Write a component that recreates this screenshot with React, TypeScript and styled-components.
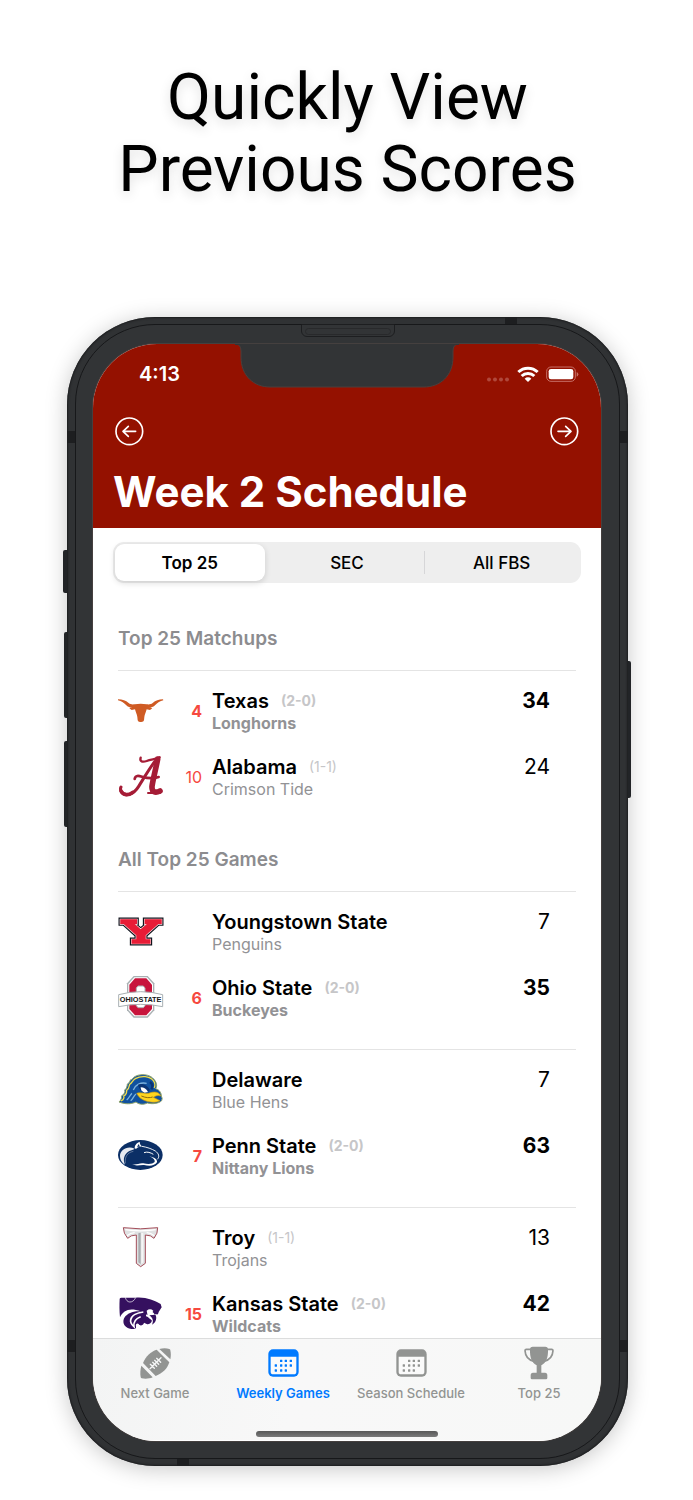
import React, { useState } from "react";
import styled, { createGlobalStyle, css } from "styled-components";

const GlobalStyle = createGlobalStyle`
  *, *::before, *::after { box-sizing: border-box; }
  body {
    margin: 0;
    background: #fff;
    color: #000;
    font-family: Inter, "Liberation Sans", sans-serif;
  }
  h1, h2, p, ul { margin: 0; padding: 0; font-weight: inherit; }
  button { border: 0; background: none; padding: 0; margin: 0; font: inherit; color: inherit; cursor: pointer; }
  svg { display: block; }
`;

const Page = styled.main`
  display: flex;
  flex-direction: column;
  gap: 111px;
  padding: 62px 65px 34px 67px;
`;

const Headline = styled.h1`
  font-family: Roboto, "Liberation Sans", sans-serif;
  font-size: 64px;
  line-height: 72px;
  text-align: center;
  text-shadow: 0 4px 12px rgba(0, 0, 0, 0.13);
`;

/* ---------- device ---------- */

const Phone = styled.section`
  position: relative;
  padding: 7px 8px;
  border-radius: 88px;
  background: #303234;
  box-shadow: inset 0 0 2px 1px #1c1d1f, 0 3px 22px rgba(0, 0, 0, 0.22);
`;

const Bezel = styled.div`
  position: relative;
  padding: 19px 18px 17px 17px;
  border: 1px solid #17181a;
  border-radius: 80px;
  background: #323436;
`;

const Screen = styled.div`
  position: relative;
  overflow: hidden;
  border-radius: 64px;
  background: #fff;
  box-shadow: 0 0 0 1px #45403f;
`;

const SideButton = styled.span<{ $side: "left" | "right"; $top: number; $length: number; $depth: number }>`
  position: absolute;
  top: ${(p) => p.$top}px;
  ${(p) => p.$side}: -${(p) => p.$depth}px;
  width: ${(p) => p.$depth}px;
  height: ${(p) => p.$length}px;
  border-radius: ${(p) => (p.$side === "left" ? "2px 0 0 2px" : "0 2px 2px 0")};
  background: #222427;
`;

const Band = styled.span<{ $edge: "left" | "right" | "top" | "bottom"; $from: "top" | "bottom" | "left" | "right"; $at: number }>`
  position: absolute;
  ${(p) => p.$edge}: 0;
  ${(p) => p.$from}: ${(p) => p.$at}px;
  background: #1d1e20;
  ${(p) =>
    p.$edge === "left" || p.$edge === "right"
      ? css`width: 8px; height: 12px;`
      : css`width: 12px; height: 7px;`}
`;

const Speaker = styled.span`
  position: absolute;
  top: -1px;
  left: 50%;
  width: 94px;
  height: 13px;
  margin-left: -47px;
  border: 1px solid #1d1e20;
  border-radius: 1px 1px 6px 6px;

  &::after {
    content: "";
    position: absolute;
    inset: 3px 3px 1px;
    border: 1px solid #28292b;
    border-radius: 4px;
  }
`;

const Notch = styled.svg`
  position: absolute;
  top: 0;
  left: 50%;
  margin-left: -112px;
`;

/* ---------- header ---------- */

const Header = styled.header`
  padding: 18px 20px 11px;
  background: #941100;
  color: #fff;
`;

const StatusBar = styled.div`
  display: flex;
  align-items: center;
  justify-content: space-between;
  padding: 0 2px 0 26px;
  font-size: 20px;
  font-weight: 600;
  line-height: 24px;
`;

const StatusIcons = styled.div`
  display: flex;
  align-items: center;
  gap: 7px;
`;

const NavRow = styled.nav`
  display: flex;
  justify-content: space-between;
  padding: 31px 2px 21px;
`;

const Title = styled.h2`
  font-size: 42px;
  font-weight: 700;
  line-height: 50px;
`;

/* ---------- filter ---------- */

const Segments = styled.div`
  display: grid;
  grid-template-columns: repeat(3, 1fr);
  margin: 14px 20px 0;
  padding: 2px;
  border-radius: 11px;
  background: #eee;
`;

const Segment = styled.button<{ $selected: boolean; $divided: boolean }>`
  position: relative;
  height: 37px;
  margin-right: ${(p) => (p.$selected ? 5 : 0)}px;
  border-radius: 9px;
  font-size: 17px;
  font-weight: ${(p) => (p.$selected ? 600 : 500)};
  line-height: 20px;
  ${(p) =>
    p.$selected &&
    css`
      background: #fff;
      box-shadow: 0 2px 6px rgba(0, 0, 0, 0.14);
    `}
  ${(p) =>
    p.$divided &&
    css`
      &::before {
        content: "";
        position: absolute;
        left: 0;
        top: 7px;
        bottom: 7px;
        width: 1px;
        background: #d6d6d8;
      }
    `}
`;

/* ---------- schedule ---------- */

const Schedule = styled.div`
  padding: 24px 25px 0;
`;

const SectionTitle = styled.h2`
  padding: 20px 0 19px;
  color: #8c8c8f;
  font-size: 19px;
  font-weight: 600;
  line-height: 24px;
`;

const Game = styled.article<{ $last?: boolean }>`
  display: flex;
  flex-direction: column;
  gap: 22px;
  padding: 18px 26px ${(p) => (p.$last ? 2 : 29)}px 0;
  border-top: 1px solid #e4e4e4;
`;

const TeamRow = styled.div<{ $winner: boolean }>`
  display: grid;
  grid-template-columns: 46px 28px 1fr auto;
  column-gap: 10px;
  align-items: center;
  height: 44px;
  font-weight: ${(p) => (p.$winner ? 700 : 400)};
`;

const Rank = styled.span`
  color: #f6493f;
  font-size: 16px;
  line-height: 20px;
  text-align: right;
`;

const TeamText = styled.div`
  min-width: 0;
`;

const NameLine = styled.p`
  display: flex;
  align-items: center;
  gap: 12px;
  line-height: 24px;
  white-space: nowrap;
`;

const TeamName = styled.span`
  font-size: 20px;
  font-weight: 600;
`;

const Record = styled.span`
  color: #c6c6c8;
  font-size: 14px;
`;

const Mascot = styled.p`
  color: #929295;
  font-size: 16px;
  line-height: 20px;
`;

const Score = styled.span`
  align-self: start;
  font-size: 21px;
  line-height: 24px;
`;

/* ---------- tab bar ---------- */

const TabBar = styled.footer`
  border-top: 1px solid #dcdddd;
  border-bottom: 1px solid #fff;
  background: linear-gradient(100deg, #f3f4f4, #f8f8f8 40%, #f7f8f7);
`;

const Tabs = styled.nav`
  display: flex;
  margin: 0 -2px;
  padding-top: 7px;
`;

const Tab = styled.button<{ $active: boolean }>`
  flex: 1 1 0;
  display: flex;
  flex-direction: column;
  align-items: center;
  gap: 5px;
  color: ${(p) => (p.$active ? "#007aff" : "#929492")};
  font-size: 13px;
  font-weight: ${(p) => (p.$active ? 600 : 500)};
  line-height: 16px;
  white-space: nowrap;
`;

const TabIcon = styled.span`
  display: grid;
  place-items: center;
  height: 34px;
`;

const HomeIndicator = styled.div`
  width: 182px;
  height: 6px;
  margin: 30px auto 3px;
  border-radius: 3px;
  background: linear-gradient(#585858, #7a7a7a);
`;

/* ---------- icons ---------- */

function CircleArrow({ flip = false }: { flip?: boolean }) {
  return (
    <svg width="29" height="29" viewBox="0 0 87 87" fill="none" stroke="#fff" strokeWidth="5" strokeLinecap="round" strokeLinejoin="round" aria-hidden="true">
      <circle cx="43" cy="43" r="40" />
      <path d={flip ? "M24 43H63M47 28L63 43L47 58" : "M62 43H24M40 28L24 43L40 58"} />
    </svg>
  );
}

function SignalDots() {
  return (
    <svg width="24" height="16" viewBox="0 0 24 16" fill="#b0483b" aria-hidden="true">
      {[3, 9, 15, 21].map((x) => (
        <circle key={x} cx={x} cy="13.5" r="2" />
      ))}
    </svg>
  );
}

function Wifi() {
  return (
    <svg width="22" height="16" viewBox="0 0 66 48" fill="none" stroke="#fff" strokeWidth="9" aria-hidden="true">
      <path d="M4 18A42 42 0 0 1 62 18" />
      <path d="M14 30A27 27 0 0 1 52 30" />
      <path d="M33 48L23 38A14 14 0 0 1 43 38Z" fill="#fff" stroke="none" />
    </svg>
  );
}

function Battery() {
  return (
    <svg width="33" height="16" viewBox="0 0 99 48" aria-hidden="true">
      <rect x="2" y="3" width="86" height="43" rx="13" fill="none" stroke="#c76f65" strokeWidth="3" />
      <rect x="8" y="9" width="74" height="31" rx="7" fill="#fff" />
      <path d="M92 18Q97 20 97 25T92 32Z" fill="#c76f65" />
    </svg>
  );
}

function FootballIcon() {
  return (
    <svg width="31" height="31" viewBox="0 0 93 93" aria-hidden="true">
      <g fill="currentColor">
        <path d="M9 45C18 24 32 11 50 5L88 43C82 62 68 76 47 84Z" />
        <path d="M58 3C68 0 80 0 88 3Q91 4 91 7C93 15 93 26 91 34Z" />
        <path d="M4 53L38 88C28 93 14 93 5 91Q2 90 2 87C0 77 1 63 4 53Z" />
      </g>
      <path d="M30 62L63 29M31 49L43 61M38 43L50 55M44 37L56 49M50 31L62 43" stroke="#f6f7f7" strokeWidth="4" strokeLinecap="round" fill="none" />
    </svg>
  );
}

function CalendarIcon() {
  const dots = [
    [39, 35], [53, 35], [68, 35],
    [23, 49], [39, 49], [53, 49], [68, 49],
    [23, 64], [39, 64], [53, 64],
  ];
  return (
    <svg width="31" height="28" viewBox="0 0 93 84" aria-hidden="true">
      <rect x="1" y="1" width="91" height="82" rx="14" fill="currentColor" />
      <path d="M8 23H85V69Q85 76 77 76H16Q8 76 8 69Z" fill="#fafafa" />
      {dots.map(([x, y]) => (
        <rect key={`${x}-${y}`} x={x - 3} y={y - 3} width="7" height="7" rx="1" fill="currentColor" />
      ))}
    </svg>
  );
}

function TrophyIcon() {
  return (
    <svg width="30" height="34" viewBox="0 0 90 102" aria-hidden="true">
      <g fill="currentColor">
        <path d="M18 8Q19 2 26 2H64Q71 2 72 8C73 36 66 50 52 58V80H63Q70 80 70 88V96Q70 100 66 100H24Q20 100 20 96V88Q20 80 27 80H38V58C24 50 17 36 18 8Z" />
      </g>
      <path d="M19 10H7Q3 10 3 14C4 32 14 43 31 46M71 10H83Q87 10 87 14C86 32 76 43 59 46" fill="none" stroke="currentColor" strokeWidth="5" strokeLinecap="round" />
    </svg>
  );
}

/* ---------- team logos ---------- */

function Logo({ children }: { children: React.ReactNode }) {
  return (
    <svg width="46" height="44" viewBox="0 0 138 132" overflow="visible" aria-hidden="true">
      {children}
    </svg>
  );
}

const TexasLogo = () => (
  <Logo>
    <path
      fill="#cf5b24"
      d="M0 31C14 31 23 35 32 42C37 46 42 47 50 46Q68 43 86 46C94 47 99 46 104 42C113 35 122 31 135 31L136 34C126 36 119 41 111 49C106 54 101 56 94 55L103 58L96 63L86 61C84 70 80 76 79 84L78 94Q77 99 70 99H66Q60 99 59 94L58 84C57 76 53 70 51 61L41 63L34 58L42 55C35 56 30 54 25 49C17 41 10 36 0 34Z"
    />
  </Logo>
);

const AlabamaLogo = () => (
  <Logo>
    <g fill="none" stroke="#a51c36" strokeLinecap="round" strokeLinejoin="round">
      <path d="M68 8C64 20 74 22 86 18C100 12 112 14 125 7" strokeWidth="7" />
      <path d="M119 12C114 40 105 72 102 94C101 112 112 115 126 108" strokeWidth="17" />
      <path d="M110 20C92 44 76 72 62 94C46 120 20 128 9 108Q6 102 9 96" strokeWidth="9" />
      <path d="M9 108C16 122 32 122 44 112" strokeWidth="11" />
      <path d="M50 72C52 60 62 62 72 65C88 70 104 72 122 66" strokeWidth="8" />
      <path d="M90 114H126" strokeWidth="6" />
    </g>
  </Logo>
);

const youngstownShape =
  "M7 28H57V42H50L68 58L87 42H80V28H131V42H121L83 76V88H97V101H41V88H55V76L17 42H7Z";

const YoungstownLogo = () => (
  <Logo>
    <path d={youngstownShape} fill="#10131c" stroke="#10131c" strokeWidth="11" />
    <path d={youngstownShape} fill="#fff" stroke="#fff" strokeWidth="4" />
    <path d={youngstownShape} fill="#e81c36" stroke="#e81c36" strokeWidth="1" />
  </Logo>
);

const OhioStateLogo = () => (
  <Logo>
    <path d="M47 0H89L109 22V103L89 125H47L27 103V22Z" fill="#a9b0b3" />
    <path d="M49 4H87L105 24V101L87 121H49L31 101V24Z" fill="#fff" />
    <path d="M51 7H85L102 26V99L85 118H51L34 99V26Z" fill="#c8143c" />
    <path d="M60 30H76L81 36V89L76 95H60L55 89V36Z" fill="#fff" stroke="#a9b0b3" strokeWidth="3" />
    <path d="M2 56Q68 38 134 56V92Q68 78 2 92Z" fill="#fff" stroke="#a9b0b3" strokeWidth="3" />
    <text x="68" y="78" fontFamily='"Liberation Sans", sans-serif' fontWeight="700" fontSize="22" textAnchor="middle" fill="#15171a">
      OHIOSTATE
    </text>
  </Logo>
);

const DelawareLogo = () => (
  <Logo>
    <path
      d="M3 102C10 96 12 88 10 84C18 80 22 72 20 66C26 62 28 52 28 48C34 46 36 38 38 35C42 36 46 28 50 26C66 16 96 18 108 34C118 46 117 56 113 62C126 66 130 76 130 84Q135 92 131 98C122 107 102 109 88 105C74 112 60 108 54 102C38 110 18 108 3 102Z"
      fill="#11519e"
      stroke="#8fa36c"
      strokeWidth="3"
    />
    <path d="M9 99C20 94 18 86 17 84C27 80 26 70 26 67C35 62 33 52 35 49C42 46 44 36 52 32C70 22 94 24 106 38C112 46 112 54 108 60" fill="none" stroke="#f2dd4a" strokeWidth="4" />
    <path d="M26 96C34 90 36 80 42 76M38 98C46 92 46 84 54 78M46 66C52 50 68 42 86 46" fill="none" stroke="#7db2dc" strokeWidth="4" />
    <path d="M60 50C74 44 88 52 96 66L84 76C74 74 64 66 60 50Z" fill="#0b3473" />
    <path d="M68 58C78 58 86 64 90 72L80 74C72 72 68 66 68 58Z" fill="#fff" />
    <path d="M96 42C104 48 105 56 100 64" fill="none" stroke="#0b3473" strokeWidth="7" />
    <path d="M56 76C68 72 80 78 92 76C106 70 124 70 128 84C120 80 112 84 106 88L126 98C112 105 96 103 84 99C72 95 62 89 56 76Z" fill="#ffd51f" stroke="#c59a17" strokeWidth="2" />
    <path d="M70 84C84 90 96 90 104 87" fill="none" stroke="#8a6a12" strokeWidth="3" />
  </Logo>
);

const PennStateLogo = () => (
  <Logo>
    <ellipse cx="67" cy="63" rx="67" ry="45" fill="#0b2f66" />
    <path d="M50 42C50 32 58 26 65 23C65 30 68 34 74 38C66 36 58 40 54 45Z" fill="#fff" />
    <path d="M57 38L63 29C63 34 65 37 68 38Z" fill="#0b2f66" />
    <path d="M50 44C28 34 6 48 6 66C7 80 14 88 21 92C14 76 18 60 34 51C40 48 46 47 50 44Z" fill="#fff" opacity=".9" />
    <path d="M46 52C28 56 20 68 22 88" fill="none" stroke="#fff" strokeWidth="2" opacity=".5" />
    <path d="M72 37C88 40 100 44 112 51C122 58 126 68 118 76" fill="none" stroke="#e9eef5" strokeWidth="3" />
    <path d="M78 56C88 52 98 56 106 61" fill="none" stroke="#fff" strokeWidth="3" />
    <path d="M42 90C52 95 64 86 76 88C92 91 104 90 110 84C112 78 106 72 94 67C108 70 119 76 117 85C110 97 92 96 78 93C66 92 54 98 42 90Z" fill="#fff" />
  </Logo>
);

const TroyLogo = () => (
  <Logo>
    <path d="M16 5Q68 12 119 5Q120 22 108 37Q99 27 82 27V112L68 122L55 112V27Q38 27 29 37Q16 22 16 5Z" fill="#dfe1e2" stroke="#a34d59" strokeWidth="3" strokeLinejoin="round" />
    <path d="M22 11Q68 18 113 11M27 29Q37 21 50 20M109 29Q99 21 86 20" fill="none" stroke="#fff" strokeWidth="4" />
    <path d="M61 22V109L68 114V20Z" fill="#a9adb0" />
    <path d="M70 20V114L76 109V22Z" fill="#f6f6f6" />
  </Logo>
);

const KansasStateLogo = () => (
  <Logo>
    <path
      d="M5 20Q6 17 10 17L52 17C82 14 108 24 128 36L131 46L122 60C121 66 118 70 110 68C108 62 102 58 96 58C92 62 92 68 84 70C92 78 98 82 102 86C98 96 90 98 86 96L78 92C76 100 66 104 62 96C58 92 52 96 54 104C56 112 46 112 36 110C16 106 12 88 20 76C28 64 46 56 68 58C36 46 16 54 6 76C4 56 4 38 5 20Z"
      fill="#35105f"
    />
    <path d="M22 16C25 33 44 36 53 17" fill="none" stroke="#fff" strokeWidth="2" />
    <path d="M76 60C58 62 40 70 38 84C36 94 44 100 48 104C46 92 52 80 68 74M84 70C98 72 108 76 116 68" fill="none" stroke="#fff" strokeWidth="5" />
    <path d="M86 56Q96 48 106 56L100 66L88 66Z" fill="#fff" />
    <path d="M94 70L112 68C118 76 114 92 102 98C108 86 104 78 94 70Z" fill="#35105f" />
  </Logo>
);

/* ---------- data ---------- */

type Team = {
  name: string;
  mascot: string;
  score: number;
  rank?: number;
  record?: string;
  logo: () => React.ReactElement;
};

const sections: { title: string; games: [Team, Team][] }[] = [
  {
    title: "Top 25 Matchups",
    games: [
      [
        { name: "Texas", mascot: "Longhorns", score: 34, rank: 4, record: "2-0", logo: TexasLogo },
        { name: "Alabama", mascot: "Crimson Tide", score: 24, rank: 10, record: "1-1", logo: AlabamaLogo },
      ],
    ],
  },
  {
    title: "All Top 25 Games",
    games: [
      [
        { name: "Youngstown State", mascot: "Penguins", score: 7, logo: YoungstownLogo },
        { name: "Ohio State", mascot: "Buckeyes", score: 35, rank: 6, record: "2-0", logo: OhioStateLogo },
      ],
      [
        { name: "Delaware", mascot: "Blue Hens", score: 7, logo: DelawareLogo },
        { name: "Penn State", mascot: "Nittany Lions", score: 63, rank: 7, record: "2-0", logo: PennStateLogo },
      ],
      [
        { name: "Troy", mascot: "Trojans", score: 13, record: "1-1", logo: TroyLogo },
        { name: "Kansas State", mascot: "Wildcats", score: 42, rank: 15, record: "2-0", logo: KansasStateLogo },
      ],
    ],
  },
];

const filters = ["Top 25", "SEC", "All FBS"];

const tabs = [
  { label: "Next Game", icon: <FootballIcon /> },
  { label: "Weekly Games", icon: <CalendarIcon /> },
  { label: "Season Schedule", icon: <CalendarIcon /> },
  { label: "Top 25", icon: <TrophyIcon /> },
];

function TeamLine({ team, winner }: { team: Team; winner: boolean }) {
  const TeamLogo = team.logo;
  return (
    <TeamRow $winner={winner}>
      <TeamLogo />
      <Rank>{team.rank}</Rank>
      <TeamText>
        <NameLine>
          <TeamName>{team.name}</TeamName>
          {team.record && <Record>({team.record})</Record>}
        </NameLine>
        <Mascot>{team.mascot}</Mascot>
      </TeamText>
      <Score>{team.score}</Score>
    </TeamRow>
  );
}

export default function App() {
  const [filter, setFilter] = useState(0);
  const [tab, setTab] = useState(1);

  return (
    <>
      <GlobalStyle />
      <Page>
        <Headline>
          Quickly View
          <br />
          Previous Scores
        </Headline>
        <Phone>
          <SideButton $side="left" $top={233} $length={43} $depth={4} />
          <SideButton $side="left" $top={315} $length={86} $depth={3} />
          <SideButton $side="left" $top={424} $length={86} $depth={3} />
          <SideButton $side="right" $top={344} $length={137} $depth={3} />
          <Band $edge="left" $from="top" $at={114} />
          <Band $edge="right" $from="top" $at={114} />
          <Band $edge="left" $from="bottom" $at={114} />
          <Band $edge="right" $from="bottom" $at={114} />
          <Band $edge="top" $from="right" $at={111} />
          <Band $edge="bottom" $from="left" $at={110} />
          <Bezel>
            <Speaker />
            <Screen>
              <Header>
                <StatusBar>
                  <span>4:13</span>
                  <StatusIcons>
                    <SignalDots />
                    <Wifi />
                    <Battery />
                  </StatusIcons>
                </StatusBar>
                <NavRow aria-label="Week">
                  <button type="button" aria-label="Previous week">
                    <CircleArrow />
                  </button>
                  <button type="button" aria-label="Next week">
                    <CircleArrow flip />
                  </button>
                </NavRow>
                <Title>Week 2 Schedule</Title>
              </Header>
              <Notch width="224" height="44" viewBox="0 0 224 44" aria-hidden="true">
                <path d="M0 0Q6 0 6 7V13C6 32 19 43 35 43H189C205 43 218 32 218 13V7Q218 0 224 0Z" fill="#323436" stroke="#4a3f3d" strokeWidth="1" />
                <path d="M0 0H224V1H0Z" fill="#323436" />
              </Notch>
              <Segments role="group" aria-label="Filter games">
                {filters.map((label, i) => (
                  <Segment
                    key={label}
                    type="button"
                    aria-pressed={i === filter}
                    $selected={i === filter}
                    $divided={i > 0 && i !== filter && i - 1 !== filter}
                    onClick={() => setFilter(i)}
                  >
                    {label}
                  </Segment>
                ))}
              </Segments>
              <Schedule>
                {sections.map((section, s) => (
                  <section key={section.title}>
                    <SectionTitle>{section.title}</SectionTitle>
                    {section.games.map(([away, home], g) => (
                      <Game key={away.name} $last={s === sections.length - 1 && g === section.games.length - 1}>
                        <TeamLine team={away} winner={away.score > home.score} />
                        <TeamLine team={home} winner={home.score > away.score} />
                      </Game>
                    ))}
                  </section>
                ))}
              </Schedule>
              <TabBar>
                <Tabs aria-label="Main">
                  {tabs.map(({ label, icon }, i) => (
                    <Tab key={label} type="button" $active={i === tab} onClick={() => setTab(i)}>
                      <TabIcon>{icon}</TabIcon>
                      {label}
                    </Tab>
                  ))}
                </Tabs>
                <HomeIndicator />
              </TabBar>
            </Screen>
          </Bezel>
        </Phone>
      </Page>
    </>
  );
}
